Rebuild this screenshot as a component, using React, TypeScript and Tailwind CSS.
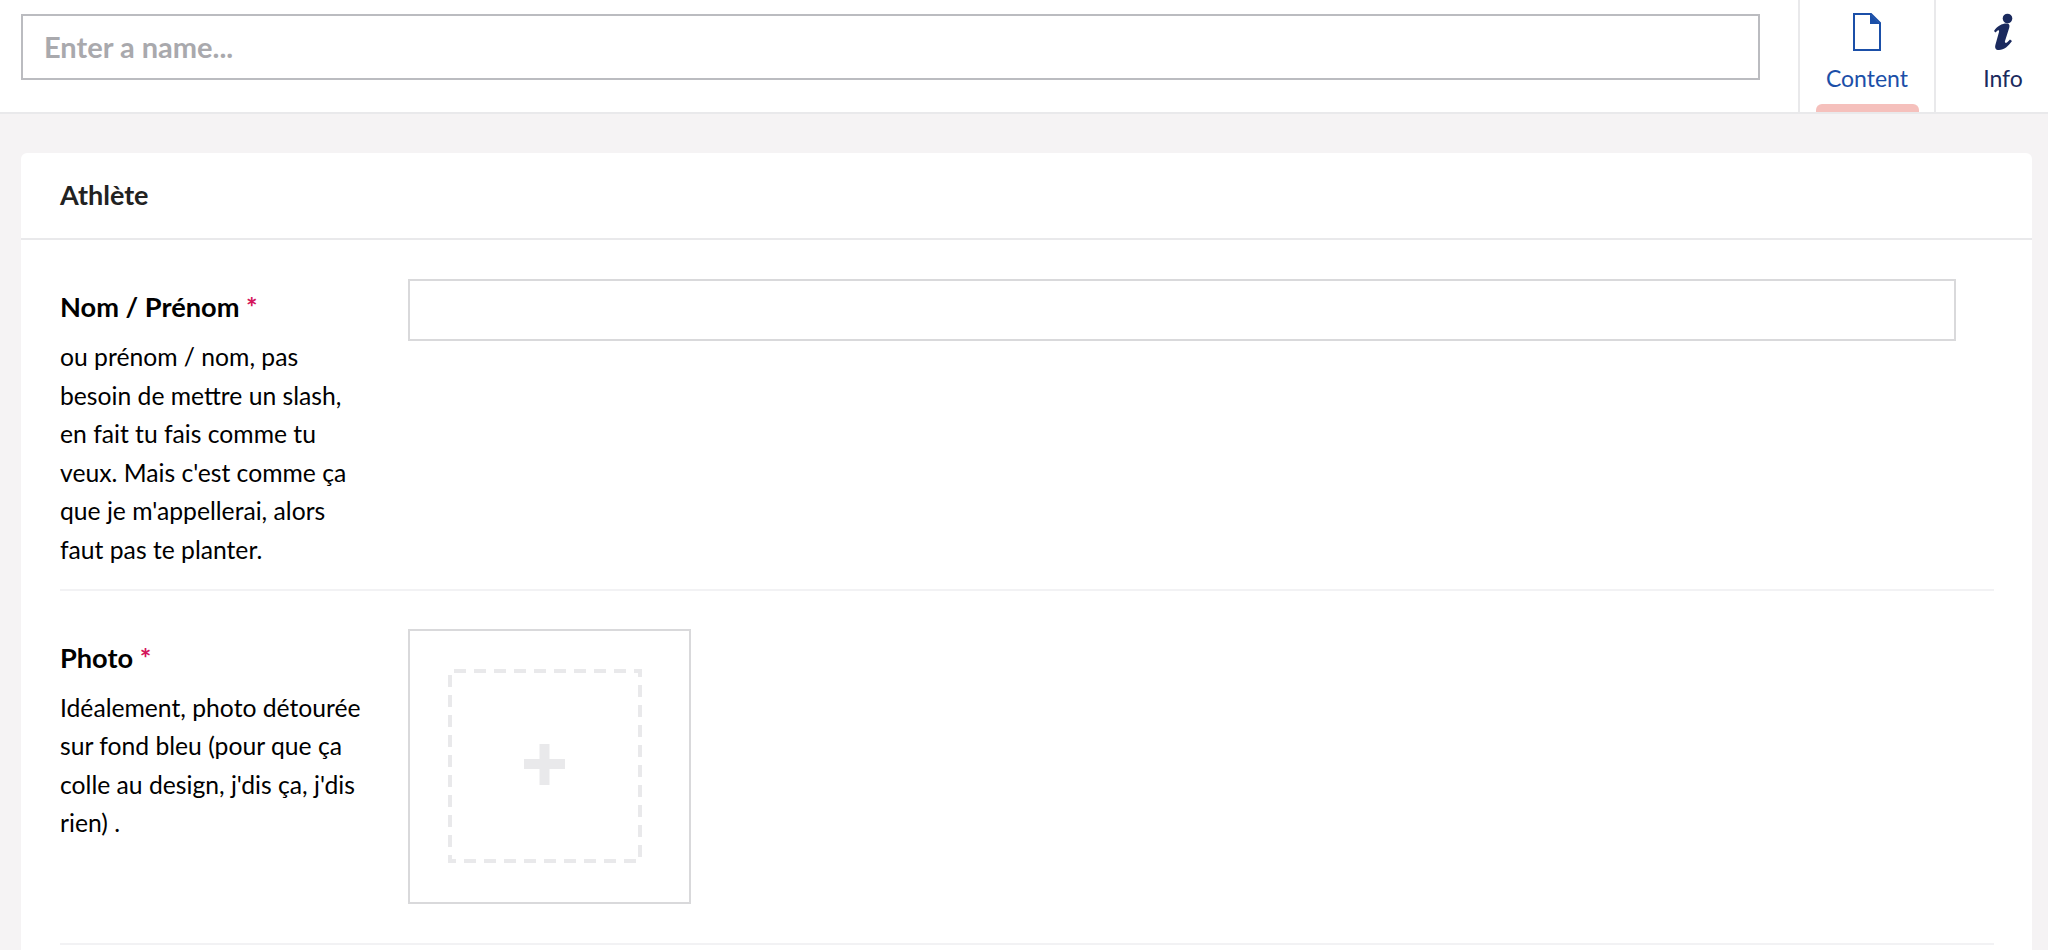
import React from 'react'

const Field: React.FC<{ label: string; children: React.ReactNode; help: React.ReactNode; className: string; labelClass: string }> = ({ label, children, help, className, labelClass }) => (
    <div className={`flex border-b-2 border-[#f2f2f4] ${className}`}>
        <div className="w-[348px] shrink-0 pr-[30px]">
            <div className={`text-[27.2px] leading-[32px] font-bold text-[#000] ${labelClass}`}>
                {label} <span className="text-[#d4145a]">*</span>
            </div>
            <div className="mt-[15px] text-[24.7px] leading-[38.6px] text-[#000]">{help}</div>
        </div>
        {children}
    </div>
)

export default function App() {
    return (
        <div className="h-[950px] bg-[#f5f3f4] font-['Lato',sans-serif] overflow-hidden">
            {/* Top bar */}
            <div className="h-[114px] bg-white border-b-2 border-[#e9e9eb] flex pl-[21px] overflow-hidden">
                <div className="w-[1739px] shrink-0 h-[66px] mt-[14px] border-2 border-[#bbbcc0] flex items-center pl-[21px] text-[29px] font-bold text-[#a9a9ad]">
                    Enter a name...
                </div>
                <div className="ml-[38px] w-[136px] shrink-0 border-l-2 border-[#e9e9eb] relative flex flex-col items-center text-[#1b4fa8]">
                    <svg className="mt-[12px] w-[28px] h-[39px]" viewBox="0 0 28 39" fill="none">
                        <path d="M1 2H18L27 11V38H1Z" stroke="#1b4fa8" strokeWidth="2" />
                        <path d="M17 2L27 12H17Z" fill="#1b4fa8" />
                    </svg>
                    <span className="mt-[13px] text-[23px] leading-[28px]">Content</span>
                    <div className="absolute bottom-0 left-[16px] w-[103px] h-[8px] bg-[#f5c0bc] rounded-t-[6px]" />
                </div>
                <div className="w-[136px] shrink-0 border-l-2 border-[#e9e9eb] flex flex-col items-center text-[#1b2a5e]">
                    <svg className="mt-[12px] w-[19px] h-[39px]" viewBox="0 0 19 39" fill="#1b2a5e">
                        <circle cx="13.5" cy="6.5" r="4.8" />
                        <path d="M0 19C3 14 8 11.5 12.5 11.5C15.5 11.5 16 13.5 15 16.5L11 29C10.5 31 12 31.5 13.5 30L16 27.5L18 29C14.5 34 10 38 5 38C1.5 38 0.5 36 1.5 32.5L5 20C5.5 18 4 18 3 19L1.5 20.5Z" />
                    </svg>
                    <span className="mt-[13px] text-[23px] leading-[28px]">Info</span>
                </div>
            </div>

            {/* Card */}
            <div className="ml-[21px] mr-[16px] mt-[39px] h-[800px] bg-white rounded-t-[6px]">
                <div className="h-[87px] border-b-2 border-[#e9e9eb] pl-[39px] flex items-center text-[27px] font-bold text-[#222]">
                    Athlète
                </div>
                <div className="pl-[39px] pr-[38px]">
                    <Field
                        label="Nom / Prénom"
                        labelClass="mt-[12px]"
                        className="pt-[39px] pb-[19px]"
                        help={<>ou prénom / nom, pas<br />besoin de mettre un slash,<br />en fait tu fais comme tu<br />veux. Mais c'est comme ça<br />que je m'appellerai, alors<br />faut pas te planter.</>}
                    >
                        <div className="flex-1 mr-[38px] h-[62px] border-2 border-[#d9d9db]" />
                    </Field>
                    <Field
                        label="Photo"
                        labelClass="mt-[13px]"
                        className="pt-[38px] pb-[39px]"
                        help={<>Idéalement, photo détourée<br />sur fond bleu (pour que ça<br />colle au design, j'dis ça, j'dis<br />rien) .</>}
                    >
                        <div className="w-[283px] h-[275px] border-2 border-[#d9d9db] flex items-center pl-[38px]">
                            <div className="w-[194px] h-[194px] relative">
                                <svg className="absolute inset-0" width="194" height="194" viewBox="0 0 194 194" fill="none">
                                    <rect x="2" y="2" width="190" height="190" stroke="#e9e9eb" strokeWidth="4" strokeDasharray="12 8" strokeDashoffset="-4" />
                                </svg>
                                <svg className="absolute left-[76px] top-[75px]" width="41" height="41" viewBox="0 0 41 41" fill="#e9e9eb">
                                    <path d="M15.5 0H25.5V15H41V25H25.5V41H15.5V25H0V15H15.5Z" />
                                </svg>
                            </div>
                        </div>
                    </Field>
                </div>
            </div>
        </div>
    )
}
